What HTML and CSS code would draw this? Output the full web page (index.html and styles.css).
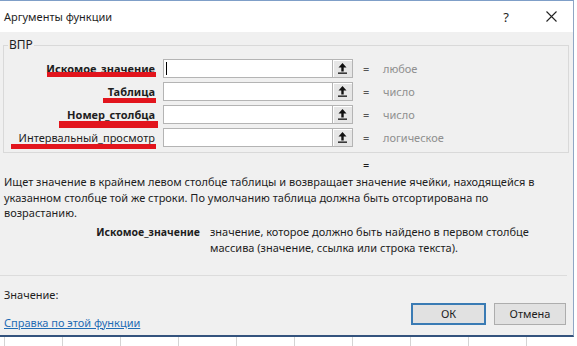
FILE: index.html
```html
<!doctype html>
<html lang="ru">
	<head>
		<meta charset="utf-8" />
		<title>Аргументы функции</title>
		<link rel="stylesheet" href="styles.css">
	</head>
	<body>
		<div class="dialog">
			<div class="titlebar">
				<span class="title">Аргументы функции</span>
				<span class="help">?</span>
				<svg class="close" width="11" height="11" viewBox="0 0 11 11">
					<path d="M0.5 0.5 L10.5 10.5 M10.5 0.5 L0.5 10.5" stroke="#222" stroke-width="1.1" fill="none" />
				</svg>
			</div>
			<div class="dialog-body">
				<div class="group">
					<span class="legend">ВПР</span>
					<div class="args">
						<label class="arg-name is-required">Искомое_значение</label>
						<div class="arg-input"><span class="caret"></span></div>
						<div class="ref-btn">
							<svg width="9" height="11" viewBox="0 0 9 11"><path d="M4.5 0 L0.5 4.5 H3.3 V8.5 H5.7 V4.5 H8.5 Z" fill="#111" /><rect x="0" y="9.5" width="9" height="1.3" fill="#111" /></svg>
						</div>
						<span class="eq">=</span>
						<span class="arg-value">любое</span>

						<label class="arg-name is-required">Таблица</label>
						<div class="arg-input"></div>
						<div class="ref-btn">
							<svg width="9" height="11" viewBox="0 0 9 11"><path d="M4.5 0 L0.5 4.5 H3.3 V8.5 H5.7 V4.5 H8.5 Z" fill="#111" /><rect x="0" y="9.5" width="9" height="1.3" fill="#111" /></svg>
						</div>
						<span class="eq">=</span>
						<span class="arg-value">число</span>

						<label class="arg-name is-required">Номер_столбца</label>
						<div class="arg-input"></div>
						<div class="ref-btn">
							<svg width="9" height="11" viewBox="0 0 9 11"><path d="M4.5 0 L0.5 4.5 H3.3 V8.5 H5.7 V4.5 H8.5 Z" fill="#111" /><rect x="0" y="9.5" width="9" height="1.3" fill="#111" /></svg>
						</div>
						<span class="eq">=</span>
						<span class="arg-value">число</span>

						<label class="arg-name">Интервальный_просмотр</label>
						<div class="arg-input"></div>
						<div class="ref-btn">
							<svg width="9" height="11" viewBox="0 0 9 11"><path d="M4.5 0 L0.5 4.5 H3.3 V8.5 H5.7 V4.5 H8.5 Z" fill="#111" /><rect x="0" y="9.5" width="9" height="1.3" fill="#111" /></svg>
						</div>
						<span class="eq">=</span>
						<span class="arg-value">логическое</span>
					</div>
					<span class="mark mark-1"></span>
					<span class="mark mark-2"></span>
					<span class="mark mark-3"></span>
					<span class="mark mark-4"></span>
				</div>

				<div class="result-eq">=</div>

				<p class="func-desc">Ищет значение в крайнем левом столбце таблицы и возвращает значение ячейки, находящейся в<br>указанном столбце той же строки. По умолчанию таблица должна быть отсортирована по<br>возрастанию.</p>

				<div class="arg-help">
					<span class="arg-help-name">Искомое_значение</span>
					<span class="arg-help-text">значение, которое должно быть найдено в первом столбце<br>массива (значение, ссылка или строка текста).</span>
				</div>

				<div class="separator"></div>

				<div class="result">Значение:</div>

				<div class="footer">
					<a class="help-link" href="#">Справка по этой функции</a>
					<div class="buttons">
						<button class="btn btn-ok">ОК</button>
						<button class="btn">Отмена</button>
					</div>
				</div>
			</div>
		</div>
		<div class="sheet"></div>
	</body>
</html>
```

FILE: styles.css
```css
/* Page */
* {
	box-sizing: border-box;
}

body {
	margin: 0;
	background-color: #fff;
	color: #1e1e1e;
	font-family: "Noto Sans", "Open Sans", sans-serif;
	font-size: 11px;
	overflow: hidden;
}

/* Dialog frame */
.dialog {
	width: 574px;
	background-color: #f0f0f0;
	border-top: 1px solid #7f9fc8;
	border-right: 1px solid #8fa6c4;
	border-bottom: 2px solid #34537d;
}

.titlebar {
	display: flex;
	align-items: center;
	height: 31px;
	padding-left: 4px;
	background-color: #fff;
	font-size: 11px;
}

.title {
	flex: 1;
}

.help {
	margin-right: 37px;
	font-size: 13px;
}

.close {
	margin-right: 16px;
}

.dialog-body {
	height: 303px;
	padding: 13px 4px 0;
}

/* Argument group */
.group {
	position: relative;
	width: 566px;
	height: 108px;
	margin-left: -1px;
	padding-top: 13px;
	border: 1px solid #d9d9d9;
}

.legend {
	position: absolute;
	top: -9px;
	left: 4px;
	padding: 0 1px;
	background-color: #f0f0f0;
	font-size: 12px;
	line-height: 16px;
}

.args {
	display: grid;
	grid-template-columns: 159px 169px 21px 30px 1fr;
	grid-auto-rows: 19px;
	row-gap: 4px;
	align-items: center;
}

.arg-name {
	padding-right: 8px;
	text-align: right;
}

.arg-name.is-required {
	font-weight: bold;
}

.arg-input {
	display: flex;
	align-items: center;
	height: 19px;
	background-color: #fff;
	border: 1px solid #b4b4b4;
	border-right: none;
}

.caret {
	width: 1px;
	height: 13px;
	margin-left: 2px;
	background-color: #000;
}

.ref-btn {
	display: flex;
	align-items: center;
	justify-content: center;
	height: 19px;
	background-color: #e6e6e6;
	border: 1px solid #b4b4b4;
	box-shadow: inset 1px 1px 0 #fff;
}

.eq {
	padding-left: 10px;
	color: #555;
}

.arg-value {
	color: #8f8f8f;
}

/* Red marker strokes drawn over the labels */
.mark {
	position: absolute;
	height: 5px;
	background-color: #e2151d;
}

.mark-1 {
	top: 26px;
	left: 43px;
	width: 109px;
}

.mark-2 {
	top: 52px;
	left: 99px;
	width: 53px;
}

.mark-3 {
	top: 75px;
	left: 55px;
	width: 99px;
	height: 7px;
}

.mark-4 {
	top: 98px;
	left: 7px;
	width: 145px;
}

/* Description */
.result-eq {
	margin-top: 5px;
	padding-left: 359px;
	line-height: 14px;
}

.func-desc {
	margin: 2px 0 0;
	line-height: 15.5px;
}

.arg-help {
	display: grid;
	grid-template-columns: 206px 1fr;
	margin-top: 3px;
	line-height: 16px;
}

.arg-help-name {
	padding-right: 10px;
	font-size: 10.5px;
	font-weight: bold;
	text-align: right;
}

.separator {
	width: 567px;
	height: 1px;
	margin: 19px 0 0 -4px;
	background-color: #dcdcdc;
}

.result {
	margin-top: 12px;
	line-height: 14px;
}

/* Footer */
.footer {
	display: flex;
	align-items: flex-start;
	margin-top: 1px;
}

.help-link {
	margin-top: 13px;
	color: #1f6cb4;
	line-height: 14px;
}

.buttons {
	display: flex;
	gap: 8px;
	margin-left: auto;
	margin-right: 3px;
}

.btn {
	width: 72px;
	height: 22px;
	padding: 0;
	background-color: #e1e1e1;
	border: 1px solid #adadad;
	color: #1e1e1e;
	font-family: inherit;
	font-size: 11px;
}

.btn-ok {
	width: 75px;
	border: 2px solid #3a7bb4;
}

/* Spreadsheet behind the dialog */
.sheet {
	height: 9px;
	background-image: linear-gradient(to right, #d4d4d4 1px, transparent 1px);
	background-size: 58px 100%;
	background-position: 4px 0;
}
```
